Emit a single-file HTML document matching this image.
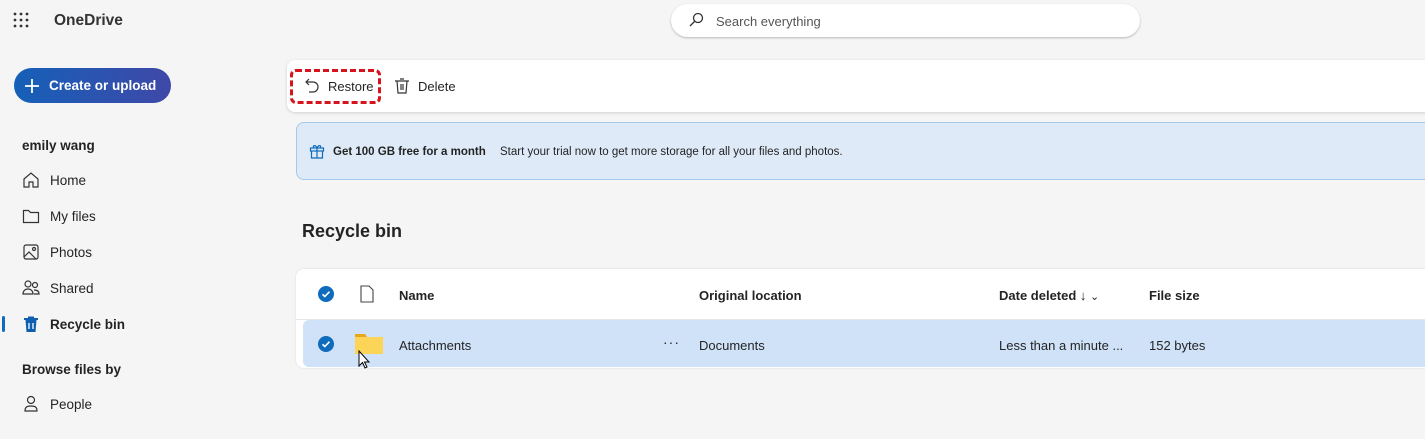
<!DOCTYPE html>
<html><head><style>
*{box-sizing:border-box;margin:0;padding:0}
body{width:1425px;height:439px;overflow:hidden;background:#f5f5f5;font-family:"Liberation Sans",sans-serif;color:#242424;position:relative}
.a{position:absolute}
.nav{left:22px;font-size:13.5px;display:flex;align-items:center;gap:10px}
.nav svg{width:18px;height:18px}
.t{font-size:13px}
</style></head><body>
<svg class="a" style="left:13px;top:12px" width="18" height="16"><g fill="#333"><circle cx="2" cy="2" r="1.4"/><circle cx="8" cy="2" r="1.4"/><circle cx="14" cy="2" r="1.4"/><circle cx="2" cy="8" r="1.4"/><circle cx="8" cy="8" r="1.4"/><circle cx="14" cy="8" r="1.4"/><circle cx="2" cy="14" r="1.4"/><circle cx="8" cy="14" r="1.4"/><circle cx="14" cy="14" r="1.4"/></g></svg>
<div class="a" style="left:54px;top:12px;font-size:15.5px;font-weight:bold;color:#333">OneDrive</div>
<div class="a" style="left:671px;top:4px;width:469px;height:33px;background:#fff;border-radius:17px;box-shadow:0 1px 2px rgba(0,0,0,.25)"></div>
<svg class="a" style="left:688px;top:12px" width="16" height="16" fill="none" stroke="#333" stroke-width="1.3"><circle cx="10" cy="6" r="4.5"/><path d="M7 9L2 14"/></svg>
<div class="a" style="left:716px;top:14px;font-size:13px;color:#555">Search everything</div>
<div class="a" style="left:14px;top:68px;width:157px;height:35px;border-radius:18px;background:linear-gradient(90deg,#1560b8,#3f48a8);color:#fff;font-weight:bold;font-size:13.5px;padding:10px 0 0 35px">Create or upload</div>
<svg class="a" style="left:24px;top:78px" width="16" height="16" stroke="#fff" stroke-width="1.8"><path d="M8 1v14M1 8h14"/></svg>
<div class="a" style="left:22px;top:138px;font-size:13.5px;font-weight:bold">emily wang</div>
<div class="a nav" style="top:171px"><svg viewBox="0 0 18 18" fill="none" stroke="#333" stroke-width="1.2"><path d="M2 8L9 2l7 6v8h-5v-5H7v5H2z"/></svg>Home</div>
<div class="a nav" style="top:207px"><svg viewBox="0 0 18 18" fill="none" stroke="#333" stroke-width="1.2"><path d="M1.5 3.5h5l2 2h8v10h-15z"/></svg>My files</div>
<div class="a nav" style="top:243px"><svg viewBox="0 0 18 18" fill="none" stroke="#333" stroke-width="1.2"><rect x="2" y="2" width="14" height="14" rx="2"/><path d="M2 14l5-5 7 7"/><circle cx="12" cy="6" r="1.5"/></svg>Photos</div>
<div class="a nav" style="top:279px"><svg viewBox="0 0 18 18" fill="none" stroke="#333" stroke-width="1.2"><circle cx="6" cy="5" r="3"/><circle cx="13" cy="6" r="2.5"/><path d="M1 15c0-3 2-5 5-5s5 2 5 5zM12 11c3 0 5 1 5 4h-5"/></svg>Shared</div>
<div class="a" style="left:2px;top:316px;width:3px;height:16px;background:#0f6cbd;border-radius:2px"></div>
<div class="a nav" style="top:315px;font-weight:bold"><svg viewBox="0 0 18 18" fill="#0f5fb0"><path d="M2 3h14v2H2zM6 1.5h6v2H6zM3.5 5h11l-1 12h-9z"/><path d="M7 8v6M11 8v6" stroke="#fff" stroke-width="1.3"/></svg>Recycle bin</div>
<div class="a" style="left:22px;top:362px;font-size:13.5px;font-weight:bold">Browse files by</div>
<div class="a nav" style="top:395px"><svg viewBox="0 0 18 18" fill="none" stroke="#333" stroke-width="1.2"><circle cx="9" cy="5" r="3.5"/><path d="M3 16c0-4 2-5 6-5s6 1 6 5z"/></svg>People</div>

<div class="a" style="left:287px;top:60px;width:1150px;height:52px;background:#fff;border-radius:8px;box-shadow:0 1px 3px rgba(0,0,0,.15)"></div>
<div class="a" style="left:290px;top:69px;width:91px;height:35px;border:3px dashed #d6141d;border-radius:6px"></div>
<svg class="a" style="left:304px;top:77px" width="16" height="18" fill="none" stroke="#333" stroke-width="1.2"><path d="M5 2L2 5l3 3M2 5h7a5 5 0 0 1 0 10H5"/></svg>
<div class="a t" style="left:328px;top:79px">Restore</div>
<svg class="a" style="left:394px;top:77px" width="16" height="18" fill="none" stroke="#333" stroke-width="1.2"><path d="M1 4h14M6 2h4M3 4l1 12h8l1-12M7 7v6M9 7v6"/></svg>
<div class="a t" style="left:418px;top:79px">Delete</div>

<div class="a" style="left:296px;top:122px;width:1140px;height:58px;background:#deeaf7;border:1px solid #a6c8ea;border-radius:8px"></div>
<svg class="a" style="left:309px;top:143px" width="16" height="16" fill="none" stroke="#0f6cbd" stroke-width="1.2"><rect x="1.5" y="5" width="13" height="3"/><path d="M2.5 8v7h11V8M8 5v10M8 5C6 1 3 3 5 5M8 5c2-4 5-2 3 0"/></svg>
<div class="a" style="left:333px;top:146px;font-size:11.5px;font-weight:bold">Get 100 GB free for a month</div>
<div class="a" style="left:500px;top:146px;font-size:11.5px">Start your trial now to get more storage for all your files and photos.</div>

<div class="a" style="left:302px;top:221px;font-size:18px;font-weight:bold">Recycle bin</div>

<div class="a" style="left:296px;top:269px;width:1140px;height:99px;background:#fff;border-radius:8px;box-shadow:0 0 2px rgba(0,0,0,.12)"></div>
<div class="a" style="left:296px;top:319px;width:1140px;height:1px;background:#e6e6e6"></div>
<div class="a" style="left:303px;top:320px;width:1130px;height:47px;background:#cfe2f8;border-radius:6px 0 0 6px"></div>
<svg class="a" style="left:318px;top:286px" width="16" height="16"><circle cx="8" cy="8" r="8" fill="#0f6cbd"/><path d="M4.5 8.3l2.3 2.2 4.7-4.8" stroke="#fff" stroke-width="1.6" fill="none"/></svg>
<svg class="a" style="left:318px;top:336px" width="16" height="16"><circle cx="8" cy="8" r="8" fill="#0f6cbd"/><path d="M4.5 8.3l2.3 2.2 4.7-4.8" stroke="#fff" stroke-width="1.6" fill="none"/></svg>
<svg class="a" style="left:360px;top:285px" width="14" height="18" fill="none" stroke="#444" stroke-width="1.1"><path d="M1 1h8l4 4v12H1z"/></svg>
<svg class="a" style="left:354px;top:333px" width="30" height="22"><path d="M1 1h10l2 3H1z" fill="#e8a81a"/><rect x="1" y="4" width="28" height="17" fill="#fcd457"/></svg>
<svg class="a" style="left:358px;top:350px" width="14" height="20"><path d="M1 1v15l3.5-3.5 2.5 5.5 2-1-2.5-5H11z" fill="#fff" stroke="#000"/></svg>
<div class="a t" style="left:399px;top:288px;font-weight:bold">Name</div>
<div class="a t" style="left:699px;top:288px;font-weight:bold">Original location</div>
<div class="a t" style="left:999px;top:288px;font-weight:bold">Date deleted ↓ <span style="font-weight:normal;font-size:11px">&#8964;</span></div>
<div class="a t" style="left:1149px;top:288px;font-weight:bold">File size</div>
<div class="a t" style="left:399px;top:338px">Attachments</div>
<div class="a" style="left:663px;top:334px;font-size:14px;letter-spacing:1px">···</div>
<div class="a t" style="left:699px;top:338px">Documents</div>
<div class="a t" style="left:999px;top:338px">Less than a minute ...</div>
<div class="a t" style="left:1149px;top:338px">152 bytes</div>
</body></html>
